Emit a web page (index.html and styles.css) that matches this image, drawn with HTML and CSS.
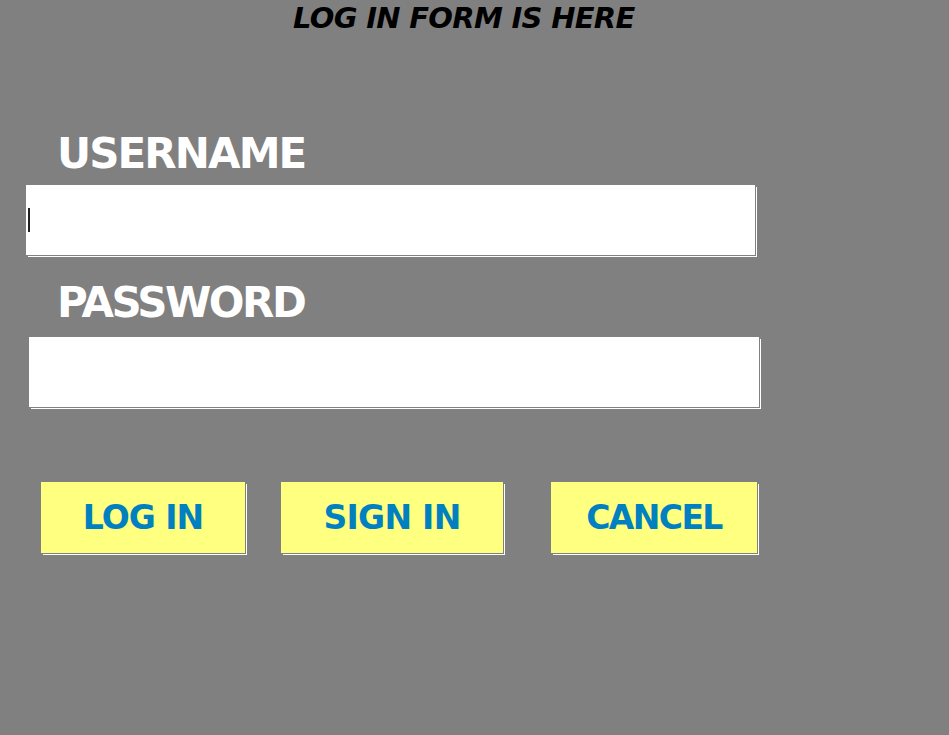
FILE: index.html
```html
<!DOCTYPE html>
<html lang="en">
<head>
<meta charset="utf-8">
<title>Log in</title>
<link rel="stylesheet" href="styles.css">
</head>
<body>
<div class="page">
  <h1 class="title">LOG IN FORM IS HERE</h1>
  <form class="form">
    <label class="label">USERNAME</label>
    <div class="field field-user"><span class="caret"></span></div>
    <label class="label label-pass">PASSWORD</label>
    <div class="field field-pass"></div>
    <div class="buttons">
      <button type="button" class="btn btn-login">LOG IN</button>
      <button type="button" class="btn btn-signin">SIGN IN</button>
      <button type="button" class="btn btn-cancel">CANCEL</button>
    </div>
  </form>
</div>
</body>
</html>
```

FILE: styles.css
```css
html, body {
  margin: 0;
  padding: 0;
  background: #808080;
  height: 100%;
}
.page {
  font-family: "DejaVu Sans", sans-serif;
  font-weight: bold;
}
.title {
  margin: 0;
  padding: 0 0 0 293px;
  font-size: 29px;
  font-style: italic;
  letter-spacing: -0.7px;
  line-height: 36px;
  color: #000;
}
.form {
  display: flex;
  flex-direction: column;
  align-items: flex-start;
  padding-top: 93px;
}
.label {
  margin-left: 57px;
  font-size: 42px;
  letter-spacing: -1.9px;
  line-height: 50px;
  color: #fff;
}
.field {
  position: relative;
  width: 729px;
  height: 70px;
  background: #fff;
  box-shadow: 1px 1px 0 #808080, 2px 2px 0 #fff;
}
.field-user {
  margin-left: 26px;
  margin-top: 6px;
}
.label-pass {
  margin-top: 23px;
  letter-spacing: -2.5px;
}
.field-pass {
  margin-left: 29px;
  margin-top: 9px;
  width: 730px;
}
.caret {
  position: absolute;
  left: 2px;
  top: 23px;
  width: 2px;
  height: 24px;
  background: #222;
}
.buttons {
  display: flex;
  margin-top: 75px;
  margin-left: 41px;
}
.btn {
  height: 71px;
  border: 0;
  padding: 0;
  background: #ffff80;
  color: #0080c0;
  font-family: inherit;
  font-weight: bold;
  font-size: 33px;
  letter-spacing: -1px;
  line-height: 1;
  box-shadow: 1px 1px 0 #808080, 2px 2px 0 #fff;
}
.btn-login { width: 204px; }
.btn-signin { width: 222px; margin-left: 36px; letter-spacing: -0.7px; }
.btn-cancel { width: 206px; margin-left: 48px; letter-spacing: -1.6px; }
```
